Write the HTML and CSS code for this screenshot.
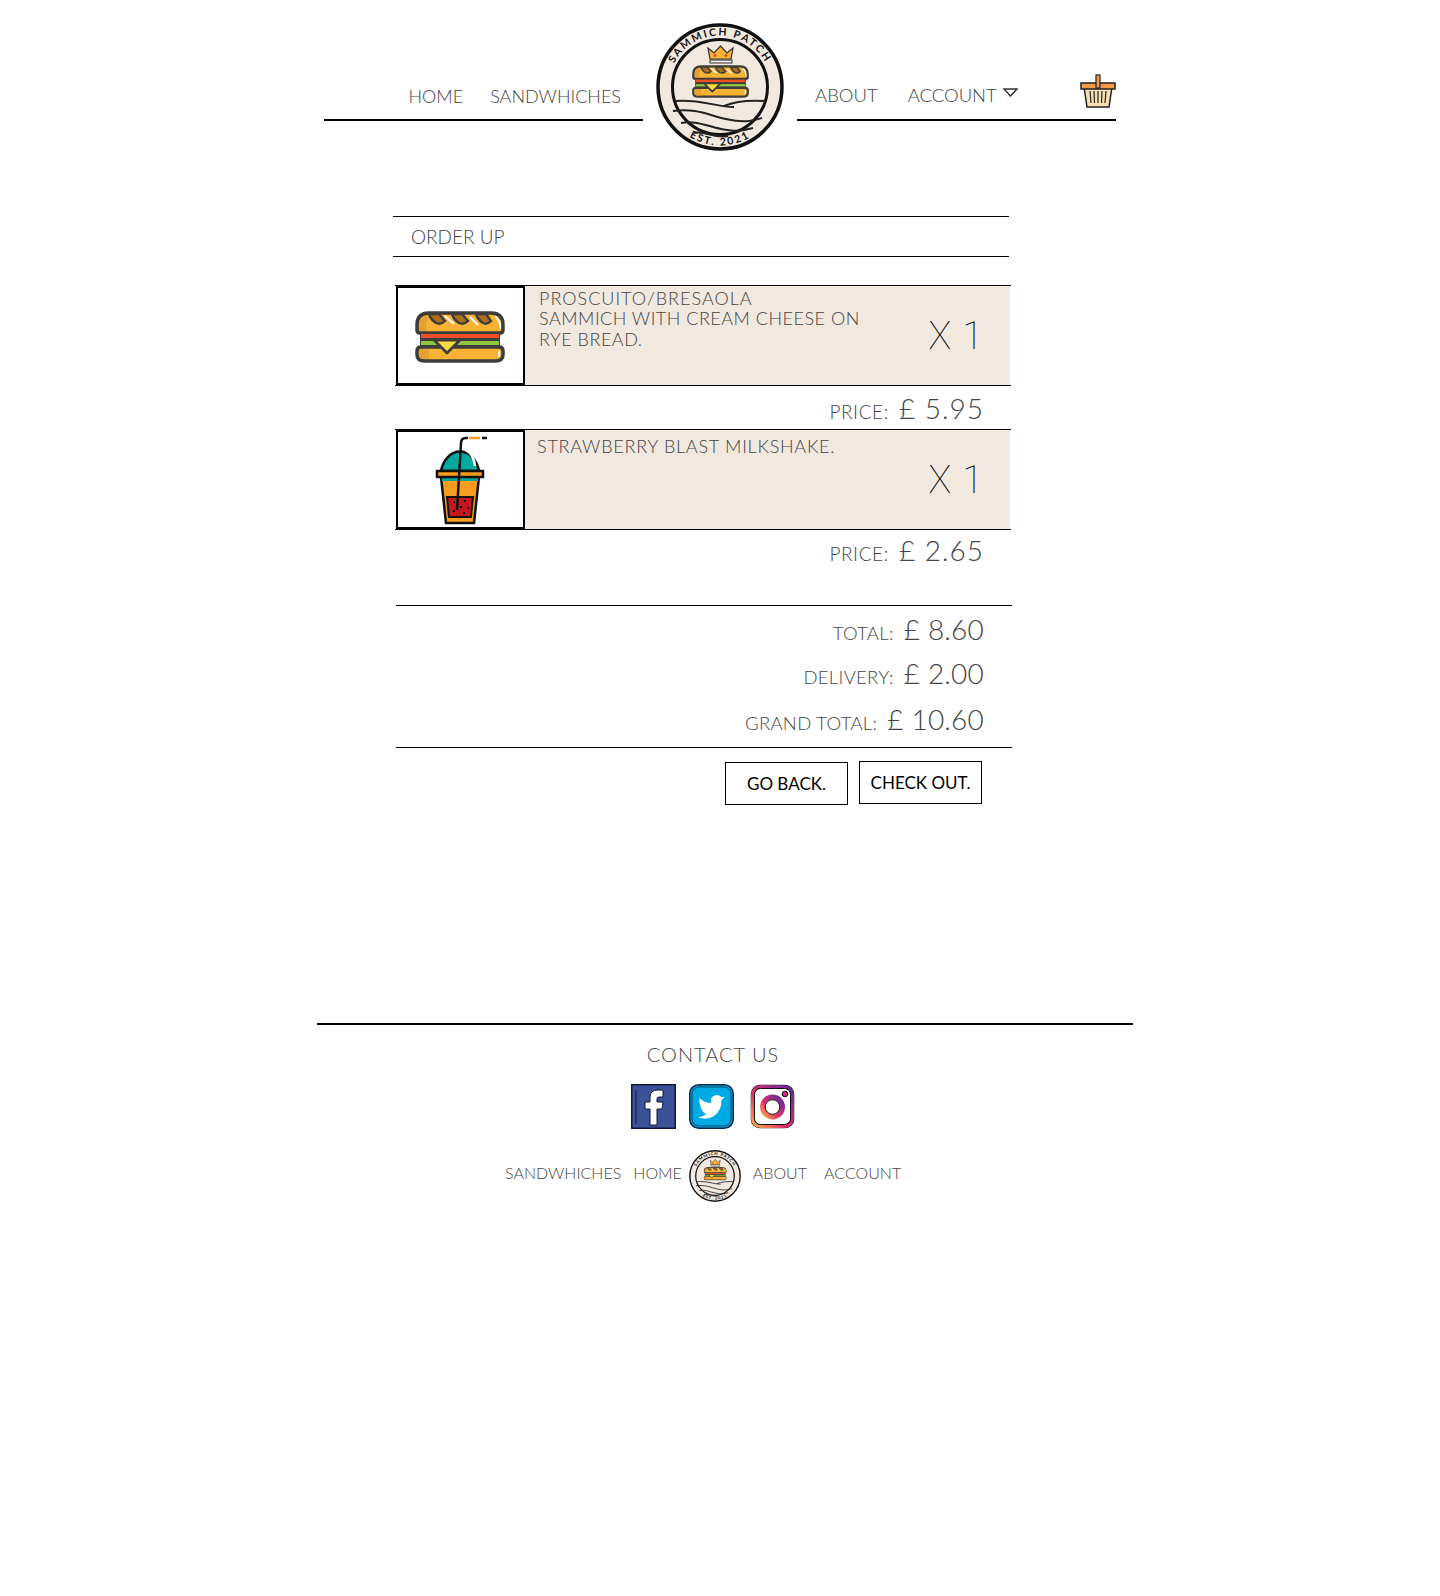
FILE: index.html
```html
<!DOCTYPE html>
<html lang="en">
<head>
    <meta charset="UTF-8">
    <meta name="viewport" content="width=device-width, initial-scale=1.0">
    <title>Sammich Patch - Order Up</title>
    <link rel="stylesheet" href="styles.css">
</head>
<body>
    <!-- shared drawings -->
    <svg class="defs" width="0" height="0">
        <symbol id="sandwich" viewBox="0 0 90 52">
            <path d="M14 2H76Q88 2 88 14V19Q88 22 85 22H5Q2 22 2 19V14Q2 2 14 2Z" fill="#f9b233"/>
            <path d="M14 2H20Q11 6 11 14V22H5Q2 22 2 19V14Q2 2 14 2Z" fill="#e4a030"/>
            <path d="M14 3H24L30 10Q26 14 21 12Q16 9 14 3ZM37 3H47L53 10Q49 14 44 12Q39 9 37 3ZM61 3H71L76 10Q72 14 68 12Q63 9 61 3Z" fill="#a8701a" stroke="#3d3d3d" stroke-width="2.400"/>
            <path d="M30 5L39 13M55 6L63 14M80 5Q85 9 86 18" stroke="#fff" stroke-width="2" fill="none"/>
            <path d="M14 2H76Q88 2 88 14V19Q88 22 85 22H5Q2 22 2 19V14Q2 2 14 2Z" fill="none" stroke="#3d3d3d" stroke-width="3.500"/>
            <rect x="5" y="22" width="80" height="14" fill="#3d3d3d"/>
            <rect x="6" y="23" width="78" height="4" fill="#f04e23"/>
            <rect x="6" y="30" width="78" height="4" fill="#8cc63f"/>
            <path d="M6 36H84Q88 36 88 40V44Q88 50 80 50H10Q2 50 2 44V40Q2 36 6 36Z" fill="#f9b233" stroke="#3d3d3d" stroke-width="3.500"/>
            <path d="M14 38V48H10Q4 48 4 44V40Q4 38 6 38Z" fill="#e4a030"/>
            <path d="M84 40V46" stroke="#fff" stroke-width="2"/>
            <path d="M19 29H45L32 42Z" fill="#f6dc3c" stroke="#3d3d3d" stroke-width="2.800" stroke-linejoin="round"/>
        </symbol>
        <symbol id="logo" viewBox="0 0 128 128">
            <circle cx="64" cy="64" r="62" fill="#f1e8df" stroke="#111" stroke-width="3.500"/>
            <circle cx="64" cy="64" r="47.500" fill="none" stroke="#111" stroke-width="3"/>
            <path id="logoTop" d="M12.500 64A51.500 51.500 0 0 1 115.500 64" fill="none"/>
            <path id="logoBottom" d="M5.500 64A58.500 58.500 0 0 0 122.500 64" fill="none"/>
            <text class="logo-text"><textPath href="#logoTop" startOffset="50%" text-anchor="middle">SAMMICH PATCH</textPath></text>
            <text class="logo-text"><textPath href="#logoBottom" startOffset="50%" text-anchor="middle">EST. 2021</textPath></text>
            <path d="M54 36L52 25L58 30L64.500 23L71 30L77 25L75 36Z" fill="#f9b233" stroke="#333" stroke-width="1.200"/>
            <rect x="54" y="37" width="22" height="3" fill="#f1e8df" stroke="#333" stroke-width="1"/>
            <circle cx="59" cy="32.500" r="1.300" fill="#d33"/><circle cx="70" cy="32.500" r="1.300" fill="#d33"/>
            <use href="#sandwich" x="36" y="42" width="57" height="33"/>
            <path d="M20 78C45 76 60 84 78 84M68 83C80 78 95 77 109 78M17 88C40 85 52 92 70 96S95 98 106 95M25 100C40 97 50 103 65 106S85 108 97 105M38 110C48 107 58 116 72 113" fill="none" stroke="#222" stroke-width="2"/>
        </symbol>
    </svg>

    <header class="site-header">
        <nav class="nav nav-left">
            <a class="nav-link" href="#">HOME</a>
            <a class="nav-link" href="#">SANDWHICHES</a>
        </nav>
        <div class="logo-cell">
            <svg class="logo"><use href="#logo"/></svg>
        </div>
        <nav class="nav nav-right">
            <a class="nav-link about" href="#">ABOUT</a>
            <a class="nav-link" href="#">ACCOUNT</a>
            <svg class="caret" viewBox="0 0 15 9"><path d="M1 1H14L7.500 8Z" fill="#fff" stroke="#333" stroke-width="1.500"/></svg>
            <svg class="basket" viewBox="0 0 36 34">
                <path d="M4 13L7 33H29L32 13Z" fill="#f6dfb4" stroke="#222" stroke-width="1.500"/>
                <path d="M10 17L11 29M14 17L14.500 29M18 17V29M22 17L21.500 29M26 17L25 29" stroke="#222" stroke-width="1.200"/>
                <rect x="1" y="9" width="34" height="6" fill="#f29a4a" stroke="#222" stroke-width="1.500"/>
                <rect x="16" y="1" width="4" height="13" fill="#f29a4a" stroke="#222" stroke-width="1.200"/>
            </svg>
        </nav>
    </header>

    <main class="order">
        <h1 class="order-title">ORDER UP</h1>

        <section class="item">
            <div class="item-thumb">
                <svg class="sandwich-pic"><use href="#sandwich"/></svg>
            </div>
            <div class="item-body">
                <p class="item-text"><span class="item-name">PROSCUITO/BRESAOLA</span><br>SAMMICH WITH CREAM CHEESE ON<br>RYE BREAD.</p>
                <span class="item-qty">X 1</span>
            </div>
        </section>
        <div class="sum-row price-row"><span class="sum-label">PRICE:</span><span class="sum-value">£ 5.95</span></div>

        <section class="item">
            <div class="item-thumb">
                <svg class="cup-pic" viewBox="0 0 48 88">
                    <path d="M5 35A19.500 25 0 0 1 43 35Z" fill="#00a99d" stroke="#111" stroke-width="2.500"/>
                    <path d="M30 14Q38 19 39 30" fill="none" stroke="#fff" stroke-width="2.500"/>
                    <path d="M5 41L10 87H38L43 41Z" fill="#f99d20" stroke="#111" stroke-width="2.500"/>
                    <rect x="6" y="42" width="36" height="3" fill="#00a99d"/>
                    <path d="M11 61H37L35 81H13Z" fill="#c8161d" stroke="#111" stroke-width="2"/>
                    <path d="M17 65h2v2h-2zM28 64h2v2h-2zM24 70h2v2h-2zM31 71h2v2h-2zM17 74h2v2h-2zM27 76h2v2h-2z" fill="#111"/>
                    <rect x="1" y="35" width="46" height="6" fill="#f99d20" stroke="#111" stroke-width="2.500"/>
                    <path d="M21 74L25 7Q25 2 30 2H32" fill="none" stroke="#111" stroke-width="2.500"/>
                    <path d="M33 2H44" stroke="#f99d20" stroke-width="2.500"/>
                    <path d="M46 2H51" stroke="#111" stroke-width="2.500"/>
                </svg>
            </div>
            <div class="item-body">
                <p class="item-text shake">STRAWBERRY BLAST MILKSHAKE.</p>
                <span class="item-qty">X 1</span>
            </div>
        </section>
        <div class="sum-row price-row second"><span class="sum-label">PRICE:</span><span class="sum-value">£ 2.65</span></div>

        <div class="totals">
            <div class="sum-row"><span class="sum-label">TOTAL:</span><span class="sum-value">£ 8.60</span></div>
            <div class="sum-row"><span class="sum-label">DELIVERY:</span><span class="sum-value">£ 2.00</span></div>
            <div class="sum-row grand"><span class="sum-label">GRAND TOTAL:</span><span class="sum-value">£ 10.60</span></div>
        </div>

        <div class="actions">
            <button class="btn back">GO BACK.</button>
            <button class="btn">CHECK OUT.</button>
        </div>
    </main>

    <footer class="site-footer">
        <h2 class="contact">CONTACT US</h2>
        <div class="social">
            <svg class="social-icon" viewBox="0 0 45 45">
                <rect x=".75" y=".75" width="43.500" height="43.500" fill="#3b5299" stroke="#14173a" stroke-width="1.500"/>
                <path d="M5 6V40" stroke="#14173a" stroke-width="1"/>
                <path d="M19 41V25H14V18H19V13Q19 6 27 6H32V13H28Q26 13 26 15V18H32L31 25H26V41Z" fill="#fff" stroke="#14173a" stroke-width="1"/>
            </svg>
            <svg class="social-icon" viewBox="0 0 45 45">
                <rect x=".75" y=".75" width="43.500" height="43.500" rx="9" fill="#00aae4" stroke="#0b2a4a" stroke-width="1.500"/>
                <rect x="3" y="3" width="39" height="39" rx="7" fill="none" stroke="#0b2a4a" stroke-width=".8"/>
                <path d="M36 13L32.500 16Q33 26 25 32Q17 37 9 33Q14 33 17 30Q11 28 10 14Q16 19 22 19Q21 12 27 11Q31 11 32 13Z" fill="#fff"/>
            </svg>
            <svg class="social-icon" viewBox="0 0 45 45">
                <defs>
                    <linearGradient id="igGrad" x1="0" y1="1" x2="1" y2="0">
                        <stop offset="0" stop-color="#fcb045"/>
                        <stop offset=".4" stop-color="#e1306c"/>
                        <stop offset="1" stop-color="#5b2a9d"/>
                    </linearGradient>
                </defs>
                <rect x=".75" y=".75" width="43.500" height="43.500" rx="9" fill="#111"/>
                <rect x="2.500" y="2.500" width="40" height="40" rx="8" fill="none" stroke="url(#igGrad)" stroke-width="3"/>
                <rect x="4.500" y="4.500" width="36" height="36" rx="6" fill="#fff" stroke="#111" stroke-width="1"/>
                <circle cx="22.500" cy="23" r="10" fill="#fff" stroke="url(#igGrad)" stroke-width="5"/>
                <circle cx="22.500" cy="23" r="7.300" fill="none" stroke="#111" stroke-width="1"/>
                <circle cx="35" cy="10" r="2.800" fill="#d62976" stroke="#111" stroke-width="1"/>
            </svg>
        </div>
        <nav class="footer-nav">
            <a class="footer-link" href="#">SANDWHICHES</a>
            <a class="footer-link" href="#">HOME</a>
            <svg class="footer-logo"><use href="#logo"/></svg>
            <a class="footer-link" href="#">ABOUT</a>
            <a class="footer-link account" href="#">ACCOUNT</a>
        </nav>
    </footer>
</body>
</html>
```

FILE: styles.css
```css
body {
    margin: 0;
    background-color: white;
    font-family: "Lato", "Liberation Sans", sans-serif;
    font-weight: 300;
    color: #444;
}
a {
    color: inherit;
    text-decoration: none;
}
.defs {
    position: absolute;
}
.logo-text {
    font-family: "Lato", sans-serif;
    font-size: 10.500px;
    font-weight: 700;
    letter-spacing: 2px;
    fill: #111;
}
.site-header {
    display: grid;
    grid-template-columns: 319px 154px 319px;
    width: 792px;
    height: 121px;
    margin-left: 324px;
}
.nav {
    display: flex;
    align-items: flex-end;
    border-bottom: 2px solid #000;
}
.nav-left {
    justify-content: flex-end;
    gap: 27px;
    padding-right: 22px;
    padding-bottom: 12px;
    font-size: 18px;
}
.nav-right {
    position: relative;
    padding-left: 18px;
    padding-bottom: 13px;
    gap: 30px;
    font-size: 18.500px;
}
.logo-cell {
    position: relative;
}
.logo {
    position: absolute;
    left: 13px;
    top: 23px;
    width: 128px;
    height: 128px;
}
.caret {
    position: absolute;
    left: 206px;
    top: 88px;
    width: 15px;
    height: 9px;
}
.basket {
    position: absolute;
    right: 0;
    top: 74px;
    width: 36px;
    height: 34px;
}
.order {
    width: 619px;
    margin: 95px 0 0 393px;
}
.order-title {
    width: 616px;
    margin: 0 0 28px;
    padding: 0 0 0 18px;
    box-sizing: border-box;
    height: 41px;
    line-height: 40px;
    border-top: 1px solid #000;
    border-bottom: 1px solid #000;
    font-size: 19px;
    font-weight: 300;
}
.item {
    display: flex;
    height: 99px;
    width: 616px;
    margin-left: 2px;
    border-top: 1px solid #000;
    border-bottom: 1px solid #000;
}
.item-thumb {
    display: flex;
    align-items: center;
    justify-content: center;
    box-sizing: border-box;
    width: 129px;
    border: 2px solid #000;
    margin-left: 1px;
}
.sandwich-pic {
    width: 90px;
    height: 52px;
    margin-top: 2px;
    margin-right: 1px;
}
.cup-pic {
    width: 48px;
    height: 88px;
    margin-right: 2px;
    overflow: visible;
}
.item-body {
    flex: 1;
    display: flex;
    justify-content: space-between;
    margin-right: 1px;
    background-color: #f1e8df;
}
.item-text {
    margin: 2px 0 0 14px;
    font-size: 18px;
    line-height: 20.400px;
    letter-spacing: 0.5px;
}
.item-name {
    letter-spacing: 1px;
}
.item-text.shake {
    margin: 6px 0 0 12px;
    letter-spacing: 0.75px;
}
.item-qty {
    align-self: center;
    margin-right: 27px;
    font-family: "Roboto", sans-serif;
    font-size: 38px;
    font-weight: 100;
    color: #000;
    word-spacing: 2px;
}
.sum-row {
    display: flex;
    justify-content: flex-end;
    align-items: baseline;
    gap: 10px;
    padding-right: 28px;
}
.price-row {
    height: 43px;
    line-height: 44px;
}
.price-row.second {
    height: 75px;
    line-height: 40px;
}
.sum-label {
    font-size: 19px;
    letter-spacing: 0.6px;
}
.sum-value {
    font-size: 28px;
    letter-spacing: 1px;
}
.totals {
    display: flex;
    flex-direction: column;
    gap: 9px;
    height: 143px;
    padding-top: 6px;
    box-sizing: border-box;
    border-top: 1px solid #000;
    border-bottom: 1px solid #000;
    margin-left: 3px;
}
.totals .sum-row {
    height: 35px;
    line-height: 35px;
}
.totals .sum-label {
    font-size: 18.500px;
    letter-spacing: 0.3px;
}
.totals .sum-value {
    letter-spacing: 0.2px;
}
.totals .grand {
    margin-top: 2px;
}
.actions {
    display: flex;
    justify-content: flex-end;
    gap: 11px;
    margin-top: 13px;
    padding-right: 30px;
}
.btn {
    width: 123px;
    height: 43px;
    background-color: white;
    border: 1px solid #000;
    font-family: inherit;
    font-size: 17px;
    font-weight: 400;
    color: #000;
}
.btn.back {
    margin-top: 1px;
}
.site-footer {
    width: 816px;
    margin: 218px 0 0 317px;
    border-top: 2px solid #000;
    text-align: center;
}
.contact {
    margin: 17px 0 0;
    padding-right: 24px;
    font-size: 20px;
    font-weight: 300;
    line-height: 24px;
    letter-spacing: 1px;
}
.social {
    display: flex;
    gap: 13px;
    margin: 18px 0 0 314px;
}
.social-icon {
    width: 45px;
    height: 45px;
}
.social-icon:last-child {
    margin-left: 3px;
}
.footer-nav {
    display: flex;
    align-items: center;
    gap: 12px;
    margin: 21px 0 0 188px;
    font-size: 16px;
}
.footer-link {
    margin-bottom: 7px;
}
.footer-logo {
    width: 52px;
    height: 52px;
    margin-left: -5px;
}
.footer-link.account {
    margin-left: 5px;
}
```
